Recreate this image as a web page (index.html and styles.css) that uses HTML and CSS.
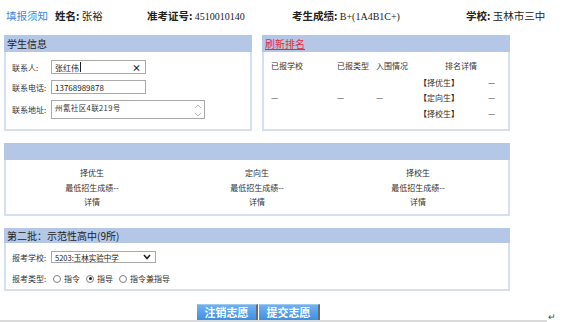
FILE: index.html
```html
<!DOCTYPE html>
<html lang="zh">
<head>
<meta charset="utf-8">
<title>志愿填报</title>
<link rel="stylesheet" href="styles.css">
</head>
<body>
<header class="top">
  <a class="notice">填报须知</a>
  <span class="f f-name"><b>姓名:</b> 张裕</span>
  <span class="f f-id"><b>准考证号:</b> <span class="serif">4510010140</span></span>
  <span class="f f-score"><b>考生成绩:</b> <span class="serif">B+(1A4B1C+)</span></span>
  <span class="f"><b>学校:</b> 玉林市三中</span>
</header>

<div class="row">
  <section class="panel p-half">
    <div class="ph">学生信息</div>
    <div class="form">
      <span class="lbl">联系人:</span>
      <div class="inp">张红伟<span class="caret"></span><span class="clr">×</span></div>
      <span class="lbl">联系电话:</span>
      <div class="inp">13768989878</div>
      <span class="lbl">联系地址:</span>
      <div class="ta"><span class="ta-text">州氰社区4联219号</span>
        <svg class="ta-scroll" width="8" height="16" viewBox="0 0 8 16"><polyline points="1,6 4,3 7,6" fill="none" stroke="#b8b8b8" stroke-width="1"/><polyline points="1,11 4,14 7,11" fill="none" stroke="#b8b8b8" stroke-width="1"/></svg>
      </div>
    </div>
  </section>
  <section class="panel p-half">
    <div class="ph"><a class="refresh">刷新排名</a></div>
    <div class="rank">
      <span>已报学校</span>
      <span>已报类型</span>
      <span>入围情况</span>
      <span class="rk-h">排名详情</span>
      <span class="mid">—</span>
      <span class="mid">—</span>
      <span class="mid">—</span>
      <div class="rk-list">
        <span><b>【</b>择优生<b>】</b></span><span>—</span>
        <span><b>【</b>定向生<b>】</b></span><span>—</span>
        <span><b>【</b>择校生<b>】</b></span><span>—</span>
      </div>
    </div>
  </section>
</div>

<section class="panel p-full p3">
  <div class="ph"></div>
  <div class="quota">
    <div class="qc"><div>择优生</div><div>最低招生成绩--</div><div>详情</div></div>
    <div class="qc"><div>定向生</div><div>最低招生成绩--</div><div>详情</div></div>
    <div class="qc"><div>择校生</div><div>最低招生成绩--</div><div>详情</div></div>
  </div>
</section>

<section class="panel p-full p4">
  <div class="ph ph-s">第二批：示范性高中(9所)</div>
  <div class="form form4">
    <span class="lbl">报考学校:</span>
    <div class="sel">5203:玉林实验中学
      <svg class="chev" width="8" height="6" viewBox="0 0 8 6"><polyline points="1,1 4,4.5 7,1" fill="none" stroke="#222" stroke-width="1.6"/></svg>
    </div>
    <span class="lbl">报考类型:</span>
    <div class="radios">
      <span class="ri"><span class="radio"></span>指令</span>
      <span class="ri"><span class="radio on"></span>指导</span>
      <span class="ri"><span class="radio"></span>指令兼指导</span>
    </div>
  </div>
</section>

<footer class="foot">
  <div class="actions">
    <button class="btn">注销志愿</button>
    <button class="btn">提交志愿</button>
  </div>
  <span class="ret">↵</span>
</footer>
</body>
</html>
```

FILE: styles.css
```css
html, body {
  margin: 0;
  padding: 0;
}
body {
  width: 561px;
  height: 322px;
  overflow: hidden;
  background: #fff;
  color: #222;
  font-family: "Noto Sans CJK SC", "Liberation Sans", sans-serif;
  font-size: 8px;
}

.top {
  display: flex;
  align-items: center;
  height: 30px;
  padding-left: 6px;
  box-sizing: border-box;
  font-size: 10.5px;
  color: #222;
}
.notice { width: 49px; color: #3d88d9; }
.f-name { width: 92px; }
.f-id { width: 145px; }
.f-score { width: 174px; }
.top b { font-weight: 700; }
.serif { font-family: "Liberation Serif", serif; font-size: 10px; }

.row {
  display: flex;
  gap: 10px;
  margin-top: 5px;
  padding-left: 4px;
}

.panel {
  box-sizing: border-box;
  border: 2px solid #d6dff2;
  border-top: 0;
  background: #fff;
}
.p-half { width: 248px; height: 96px; }
.p-full { width: 506px; margin-left: 4px; }
.p3 { height: 73px; margin-top: 12px; }
.p4 { height: 63px; margin-top: 12px; }

.ph {
  height: 17px;
  line-height: 17px;
  margin: 0 -2px;
  padding-left: 3px;
  background: #b4c7e6;
  font-size: 10px;
  color: #222;
}
.ph-s { height: 15px; line-height: 15px; }
.refresh { color: #e8273a; text-decoration: underline; }

.form {
  display: grid;
  grid-template-columns: 39px auto;
  justify-items: start;
  align-items: center;
  row-gap: 6px;
  padding: 8px 0 0 6px;
}
.lbl { font-size: 8px; color: #333; }
.inp {
  box-sizing: border-box;
  width: 95px;
  height: 14px;
  border: 1px solid #a9a9a9;
  padding-left: 3px;
  display: flex;
  align-items: center;
  font-size: 8px;
  color: #222;
}
.caret { width: 1px; height: 10px; background: #222; margin-left: 1px; }
.clr { margin-left: auto; margin-right: 4px; font-size: 9px; font-weight: 700; }
.ta {
  box-sizing: border-box;
  width: 154px;
  height: 19px;
  border: 1px solid #a9a9a9;
  padding: 1px 2px 0 3px;
  display: flex;
  justify-content: space-between;
  font-size: 7.5px;
  color: #333;
}
.ta-text { letter-spacing: 0.4px; }

.rank {
  display: grid;
  grid-template-columns: 66px 39px 39px 96px;
  grid-template-rows: 14px 47px;
  row-gap: 2px;
  align-items: center;
  padding: 6px 0 0 7px;
  color: #333;
}
.rk-h { margin-left: 30px; }
.mid { align-self: center; }
.rk-list {
  display: grid;
  grid-template-columns: 69px auto;
  grid-auto-rows: 15.5px;
  align-items: center;
  padding-left: 4px;
}
.rk-list b { font-weight: 700; color: #222; }

.quota {
  display: grid;
  grid-template-columns: 172px 158px 164px;
  padding-top: 6px;
  text-align: center;
  line-height: 14.5px;
  font-size: 8px;
  color: #333;
}

.form4 { padding-top: 8px; row-gap: 10px; }
.sel {
  box-sizing: border-box;
  width: 105px;
  height: 12px;
  border: 1px solid #a9a9a9;
  padding-left: 3px;
  display: flex;
  align-items: center;
  justify-content: space-between;
  font-size: 7.5px;
  color: #222;
}
.chev { margin-right: 4px; }
.radios { display: flex; align-items: center; gap: 6px; padding-left: 2px; }
.ri { display: flex; align-items: center; gap: 3px; color: #333; }
.radio {
  box-sizing: border-box;
  width: 8px;
  height: 8px;
  border: 1px solid #808080;
  border-radius: 50%;
  background: #fff;
  display: flex;
  align-items: center;
  justify-content: center;
}
.radio.on::after {
  content: "";
  width: 3px;
  height: 3px;
  border-radius: 50%;
  background: #222;
}

.foot {
  display: flex;
  align-items: flex-end;
  margin-top: 13px;
}
.actions {
  box-sizing: border-box;
  width: 547px;
  height: 18px;
  padding-left: 197px;
  display: flex;
  align-items: flex-start;
  gap: 1px;
  border-bottom: 2px solid #dadada;
}
.btn {
  box-sizing: border-box;
  width: 61px;
  height: 16px;
  padding: 0;
  border: 0;
  border-top: 1px solid #9cc8f2;
  border-right: 2px solid #6a6a6a;
  background: linear-gradient(#6fb2f1, #3f8fe0);
  color: #fff;
  font-family: "Noto Sans CJK SC", sans-serif;
  font-size: 11px;
  font-weight: 700;
  line-height: 15px;
}
.ret { margin-left: 1px; font-size: 9px; color: #444; line-height: 10px; }
```
